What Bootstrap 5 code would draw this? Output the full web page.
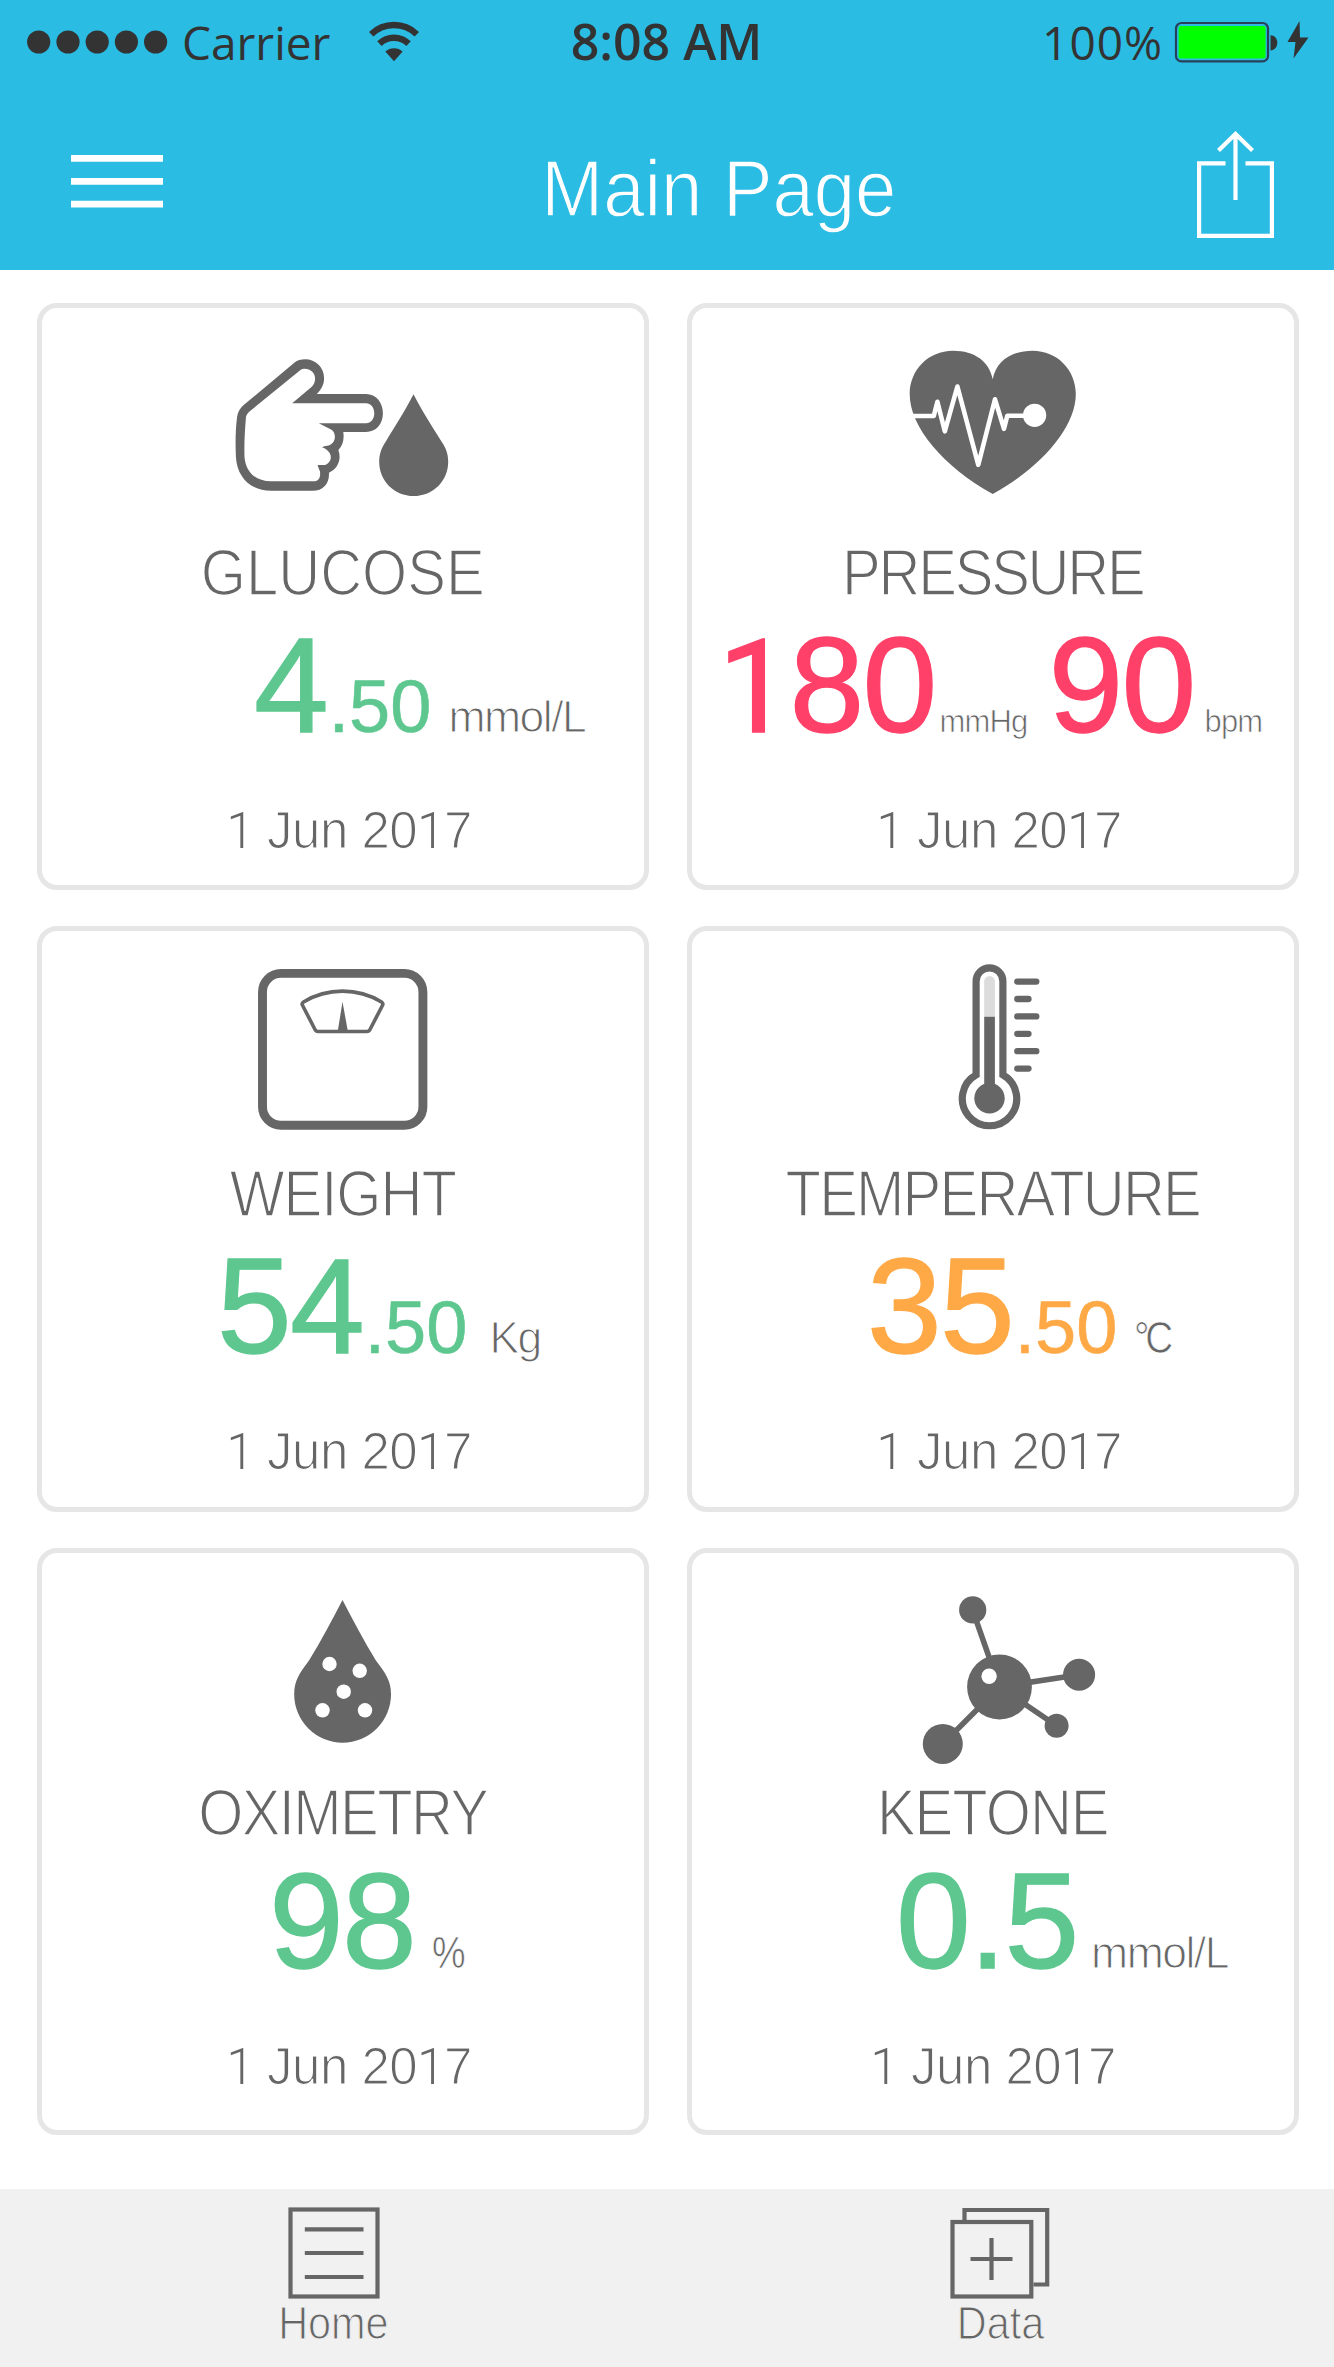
<!DOCTYPE html>
<html lang="en">
<head>
<meta charset="utf-8">
<meta name="viewport" content="width=device-width, initial-scale=1">
<title>Main Page</title>
<link href="https://cdn.jsdelivr.net/npm/bootstrap@5.3.0/dist/css/bootstrap.min.css" rel="stylesheet">
<style>
  :root { --ink: #666; --sky: #2bbce4; --ok: #5dc78f; --warn: #ffa946; --alert: #ff4069; }
  body { font-family: "Liberation Sans", Arial, sans-serif; color: var(--ink); background: #fff; width: 1334px; min-height: 2367px; }
  svg { display: block; overflow: visible; flex: none; }
  .app-head { background: var(--sky); height: 270px; }
  .status-row { height: 84px; padding: 0 25px 0 27px; font-family: "Open Sans", "Noto Sans", sans-serif; font-size: 46px; line-height: 60px; color: #333; }
  .carrier { margin-left: 14px; }
  .wifi { margin-left: 39px; }
  .clock { font-size: 50px; font-weight: 600; padding: 0 3px 2px 0; }
  .battery-pct { margin-right: 12px; letter-spacing: 1px; }
  .title-row { height: 186px; padding: 0 60px 0 71px; }
  .thin { -webkit-text-stroke: 1.6px #fff; }
  .page-title { font-size: 79px; line-height: 80px; font-weight: 400; margin: 65px 0 0 77px; transform: scaleX(.94); -webkit-text-stroke: 1.5px var(--sky); color: #fff; }
  .menu-ico { margin-top: 71px; }
  .share-ico { margin-top: 46px; }

  .tiles { padding: 33px 35px 0 37px; display: grid; grid-template-columns: 611.5px 611.5px; column-gap: 38.5px; row-gap: 36px; }
  .tile { height: 586.5px; border: 5px solid #e6e6e6; border-radius: 20px; }
  .tile-ico { margin: 30px auto 23px; }
  .tile-name { font-size: 64.5px; line-height: 64px; font-weight: 400; margin: 0 0 26px; text-align: center; transform: scaleX(.9); white-space: nowrap; }
  .reading { height: 110px; margin-bottom: 60px; white-space: nowrap; }
  .whole { font-size: 134.5px; line-height: 110px; letter-spacing: -1.8px; -webkit-text-stroke: 1.3px currentColor; }
  .frac { font-size: 74px; line-height: 1; margin-left: 1.5px; -webkit-text-stroke: .6px currentColor; }
  .unit { font-size: 44.5px; line-height: 1; letter-spacing: -1.5px; -webkit-text-stroke: 1.1px #fff; }
  .unit-sm { font-size: 31px; line-height: 1; letter-spacing: -.8px; -webkit-text-stroke: .7px #fff; }
  .day { font-size: 51px; line-height: 60px; text-align: center; padding-left: 13px; letter-spacing: -.5px; -webkit-text-stroke: 1.2px #fff; }
  /* the numeral one is set without a foot serif */
  .one { font-family: Roboto, "Liberation Sans", sans-serif; font-size: .968em; }
  .day .one { font-weight: 300; -webkit-text-stroke: 0; }
  .row-b .tile-ico { margin: 29px auto 22px; }
  .row-c .tile-ico { margin-bottom: 18px; }
  .row-c .tile-name { margin-bottom: 22px; }
  .t-ok { color: var(--ok); } .t-warn { color: var(--warn); } .t-alert { color: var(--alert); }

  .glucose .reading { padding-left: 212px; }
  .glucose .unit { margin-left: 17px; }
  .pressure .tile-name { letter-spacing: -2.5px; }
  .pressure .reading { padding-left: 26px; }
  .pressure .mmhg { margin: 0 21px 0 4px; }
  .pressure .bpm { margin-left: 10px; }
  .weight .tile-name { letter-spacing: -1.1px; }
  .weight .reading { padding-left: 175px; }
  .weight .unit { margin-left: 22px; }
  .temperature .tile-name { letter-spacing: -2px; }
  .temperature .reading { padding-left: 175px; }
  .temperature .unit { margin-left: 17px; letter-spacing: -5px; transform: scaleX(.87); transform-origin: left; -webkit-text-stroke-width: .7px; }
  .oximetry .tile-name { letter-spacing: -1.8px; }
  .oximetry .reading { padding-left: 227px; }
  .oximetry .unit { margin-left: 17px; transform: scaleX(.85); transform-origin: left; -webkit-text-stroke-width: .7px; }
  .ketone .tile-name { letter-spacing: -1.1px; }
  .ketone .reading { padding-left: 204px; }
  .ketone .unit { margin-left: 13.5px; }
  .ketone .day { padding-left: 1px; }

  .tabs { height: 178px; background: #f1f1f1; margin-top: 54.5px; padding-top: 14px; }
  .tab-label { font-size: 46px; line-height: 49px; transform: scaleX(.9); -webkit-text-stroke: 1.1px #f1f1f1; }
</style>
<script src="https://cdn.jsdelivr.net/npm/bootstrap@5.3.0/dist/js/bootstrap.bundle.min.js"></script>
</head>
<body class="d-flex flex-column">

<header class="app-head">
  <div class="status-row d-flex align-items-center">
    <div class="d-flex align-items-center" style="flex:1 1 0">
      <svg width="141" height="24" viewBox="0 0 141 24" fill="#333"><circle cx="11.7" cy="12" r="11.6"/><circle cx="41" cy="12" r="11.6"/><circle cx="70.2" cy="12" r="11.6"/><circle cx="99.4" cy="12" r="11.6"/><circle cx="128.6" cy="12" r="11.6"/></svg>
      <span class="carrier">Carrier</span>
      <svg class="wifi" width="50" height="40" viewBox="0 0 50 40">
        <path d="M2.2 12.2A33 33 0 0 1 47.8 12.2M10.4 21.6A21 21 0 0 1 39.6 21.6" fill="none" stroke="#333" stroke-width="6.4"/>
        <path d="M25 39.3 16.3 29.5a13 13 0 0 1 17.4 0z" fill="#333"/>
      </svg>
    </div>
    <div class="clock">8:08 AM</div>
    <div class="d-flex align-items-center justify-content-end" style="flex:1 1 0">
      <span class="battery-pct">100%</span>
      <svg width="134" height="44" viewBox="0 0 134 44">
        <rect x="1" y="3" width="92" height="38.4" rx="5.5" fill="none" stroke="#28405a" stroke-width="2.2"/>
        <rect x="3.6" y="6" width="87" height="32.6" rx="2" fill="#0f0"/>
        <path d="M95.5 15.2c4 0 6.8 3.4 6.8 7.6s-2.800 7.600-6.800 7.600z" fill="#333"/>
        <path d="M124.500 1 112.500 22h8L118.500 38.500 133.500 17.600h-8.500z" fill="#333"/>
      </svg>
    </div>
  </div>
  <div class="title-row d-flex align-items-start justify-content-between">
    <svg class="menu-ico" width="92" height="53" viewBox="0 0 92 53"><path d="M0 3.400H92M0 26.300H92M0 49.200H92" stroke="#fff" stroke-width="6.700"/></svg>
    <h1 class="page-title">Main Page</h1>
    <svg class="share-ico" width="77" height="108" viewBox="0 0 77 108" fill="none" stroke="#fff" stroke-width="4.200"><path d="M28.500 33.300H2.100V105.800H74.900V33.300H48.500M38.500 5V70M21.500 20.500 38.500 4 55.500 20.500"/></svg>
  </div>
</header>

<main class="tiles">
  <section class="tile glucose">
    <svg class="tile-ico" width="200" height="180" viewBox="243 338 200 180">
      <path fill="#666" d="M294.300 362.700C297.500 360 301 359.300 304.900 359.300C316 359.300 324.100 367.500 324.100 378.300C324.100 385 321 390 316.700 394H366.100C376 394 382.900 402.500 382.900 413.300S376 432 366.100 432H343.300C344.300 439 343 445.500 338.400 450C341.500 459 338.500 468.500 329 472.700C329.500 484 323 490.700 312.700 490.700H271C250 490.700 236.900 476.500 235.900 456.700C235.300 443 235.500 429 237.100 416.700C237.900 411.500 240 408.500 243.700 405z"/>
      <path fill="#fff" d="M300.800 369.800C302 369 303.300 368.700 304.900 368.700C310.500 368.700 315.100 373 315.100 378.300C315.100 381.800 314 384.500 311.800 386.700L292.200 403.300H366.100C370.800 403.300 374.300 407.500 374.300 413.300S370.800 423.300 366.100 423.300H318.800L331.500 429.700C337.200 433.600 336.200 446 325 446L322 447.300C331.500 450.500 334.500 460 325.300 465H317.600C318.300 467.500 319 469 320 471.500C320.800 477.500 318.500 481.300 313.900 481.300H271C254.500 481.300 245.300 470.500 244.500 456.700C244 443 245 429 246 416.700C246.500 414.500 248 413 249.800 411.200z"/>
      <path fill="#666" d="M413.500 394.300C422 411 433 428 441.600 441.700C446 448 448.200 454 448.200 461.700C448.200 481 433 496 413.700 496S379.200 481 379.200 461.700C379.200 454 381.400 448 385.700 441.700C394 428 405 411 413.500 394.300z"/>
    </svg>
    <h2 class="tile-name thin">GLUCOSE</h2>
    <div class="reading d-flex align-items-baseline"><span class="whole t-ok">4</span><span class="frac t-ok">.50</span><span class="unit">mmol/L</span></div>
    <div class="day"><span class="one">1</span> Jun 20<span class="one">1</span>7</div>
  </section>

  <section class="tile pressure">
    <svg class="tile-ico" width="200" height="180" viewBox="892.700 338 200 180">
      <path fill="#666" d="M992.400 379.300C989 361.500 974.500 350.700 952.700 350.700C928 350.700 909.400 370 909.400 394C909.400 427 943 466.500 992.400 494C1042 466.500 1075.500 427 1075.500 394C1075.500 370 1057 350.700 1032.200 350.700C1010.500 350.700 995.800 361.500 992.400 379.300z"/>
      <path fill="none" stroke="#fff" stroke-width="4.600" stroke-linejoin="round" d="M908 416H933.500L937.100 401.800 944.500 431.300 957.100 386.500 978 464.800 994.700 399.300 1003.700 428.800 1007 415.700H1026"/>
      <circle cx="1034.300" cy="415.300" r="11.600" fill="#fff"/>
    </svg>
    <h2 class="tile-name thin">PRESSURE</h2>
    <div class="reading d-flex align-items-baseline"><span class="whole t-alert"><span class="one">1</span>80</span><span class="unit-sm mmhg">mmHg</span><span class="whole t-alert">90</span><span class="unit-sm bpm">bpm</span></div>
    <div class="day"><span class="one">1</span> Jun 20<span class="one">1</span>7</div>
  </section>

  <section class="tile weight row-b">
    <svg class="tile-ico" width="200" height="180" viewBox="243 960 200 180">
      <rect x="262.500" y="973.400" width="160.400" height="151.800" rx="18.500" fill="none" stroke="#666" stroke-width="8.900"/>
      <path fill="none" stroke="#666" stroke-width="3.600" stroke-linejoin="round" d="M303.500 1002C327 987.500 358 987.500 381.500 1002Q383.600 1003.500 382.400 1005.500L370 1029.500Q369 1031.500 367 1031.500H318Q316 1031.500 315 1029.500L302.600 1005.500Q301.400 1003.500 303.500 1002z"/>
      <path fill="#666" d="M342.500 1001.700 347.800 1031H337.800z"/>
    </svg>
    <h2 class="tile-name thin">WEIGHT</h2>
    <div class="reading d-flex align-items-baseline"><span class="whole t-ok">54</span><span class="frac t-ok">.50</span><span class="unit">Kg</span></div>
    <div class="day"><span class="one">1</span> Jun 20<span class="one">1</span>7</div>
  </section>

  <section class="tile temperature row-b">
    <svg class="tile-ico" width="200" height="180" viewBox="892.700 960 200 180">
      <path fill="none" stroke="#666" stroke-width="7.200" d="M975.800 1074.900V981.200a13.400 13.400 0 0 1 26.800 0V1074.900A27.200 27.200 0 1 1 975.800 1074.900z"/>
      <path fill="#dcdcdc" d="M983.900 1017V981.300a5.350 5.350 0 0 1 10.700 0V1017z"/>
      <path fill="#666" d="M983.900 1016.800h10.700V1092h-10.700z"/>
      <circle cx="989.200" cy="1098.300" r="15.200" fill="#666"/>
      <path stroke="#666" stroke-width="6.300" stroke-linecap="round" d="M1017 981.600H1036M1017 999H1028.200M1017 1016.400H1036M1017 1033.800H1028.200M1017 1051.200H1036M1017 1068.600H1028.200"/>
    </svg>
    <h2 class="tile-name thin">TEMPERATURE</h2>
    <div class="reading d-flex align-items-baseline"><span class="whole t-warn">35</span><span class="frac t-warn">.50</span><span class="unit">°C</span></div>
    <div class="day"><span class="one">1</span> Jun 20<span class="one">1</span>7</div>
  </section>

  <section class="tile oximetry row-c">
    <svg class="tile-ico" width="200" height="180" viewBox="243 1583 200 180">
      <path fill="#666" d="M342.500 1600C353 1620 364 1641 375.900 1660.500C386 1674 391 1681 391 1694.300A48.400 48.400 0 0 1 342.600 1742.700A48.400 48.400 0 0 1 294.200 1694.300C294.200 1681 299 1674 309 1660.500C321 1641 332 1620 342.500 1600z"/>
      <g fill="#fff"><circle cx="329.500" cy="1664" r="7.200"/><circle cx="359.700" cy="1670.800" r="7.200"/><circle cx="343.700" cy="1691.700" r="7.200"/><circle cx="322.500" cy="1710.300" r="7.200"/><circle cx="365" cy="1710.300" r="7.200"/></g>
    </svg>
    <h2 class="tile-name thin">OXIMETRY</h2>
    <div class="reading d-flex align-items-baseline"><span class="whole t-ok">98</span><span class="unit">%</span></div>
    <div class="day"><span class="one">1</span> Jun 20<span class="one">1</span>7</div>
  </section>

  <section class="tile ketone row-c">
    <svg class="tile-ico" width="200" height="180" viewBox="892.700 1583 200 180">
      <path stroke="#666" stroke-width="5.600" d="M972.200 1609.900 999.200 1687 1078.800 1674.700M1056.300 1725.700 999.200 1687 942.400 1743.900" fill="none"/>
      <g fill="#666"><circle cx="999.200" cy="1687" r="32.400"/><circle cx="972.400" cy="1609.900" r="13.600"/><circle cx="1078.800" cy="1674.700" r="16"/><circle cx="1056.300" cy="1725.700" r="12"/><circle cx="942.500" cy="1743.900" r="20"/></g>
      <circle cx="988.800" cy="1676.300" r="7.700" fill="#fff"/>
    </svg>
    <h2 class="tile-name thin">KETONE</h2>
    <div class="reading d-flex align-items-baseline"><span class="whole t-ok">0.5</span><span class="unit">mmol/L</span></div>
    <div class="day"><span class="one">1</span> Jun 20<span class="one">1</span>7</div>
  </section>
</main>

<nav class="tabs d-flex">
  <div class="w-50 d-flex flex-column align-items-center">
    <svg width="100" height="96" viewBox="283.500 2203 100 96" fill="none" stroke="#666" stroke-width="4.200"><rect x="290" y="2209.500" width="87" height="87"/><path d="M304.300 2229.300H363M304.300 2253H363M304.300 2277H363"/></svg>
    <span class="tab-label">Home</span>
  </div>
  <div class="w-50 d-flex flex-column align-items-center">
    <svg width="100" height="96" viewBox="950.500 2203 100 96" fill="none" stroke="#666" stroke-width="4.200"><path d="M964 2220V2210H1046.700V2284.500H1033"/><rect x="952" y="2222" width="78.800" height="74.500"/><path d="M970 2259H1012M991 2238V2280"/></svg>
    <span class="tab-label">Data</span>
  </div>
</nav>
</body>
</html>
